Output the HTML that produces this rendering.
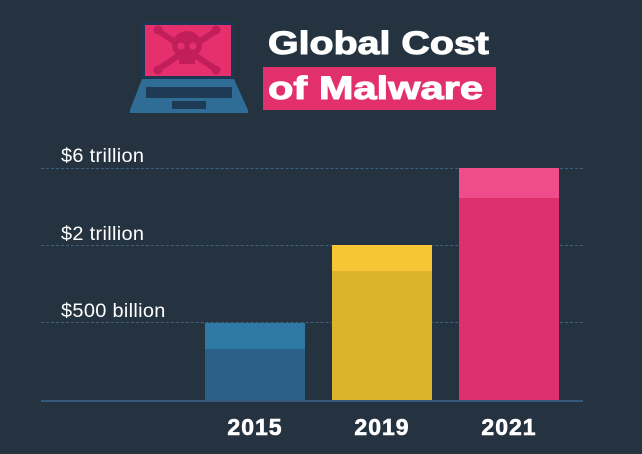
<!DOCTYPE html>
<html><head><meta charset="utf-8"><style>
html,body{margin:0;padding:0}
body{width:642px;height:454px;background:#253341;position:relative;overflow:hidden;font-family:"Liberation Sans",Arial,sans-serif}
.abs{position:absolute}
.dash{position:absolute;left:41px;width:542px;height:0;border-top:1px dashed #3f6180}
.lbl{position:absolute;left:61px;color:#fff;font-size:19px;letter-spacing:0.3px;transform:scaleX(1.05);transform-origin:left}
.yr{position:absolute;color:#fff;font-weight:bold;font-size:23px;width:100px;text-align:center;top:414px;-webkit-text-stroke:0.6px #fff;letter-spacing:1px}
.tt{position:absolute;color:#fff;font-weight:bold;font-size:32px;transform:scaleX(1.23);transform-origin:left;-webkit-text-stroke:1px #fff;white-space:nowrap}
</style></head><body>
<svg class="abs" style="left:0;top:0" width="642" height="454">
 <path d="M142 79 L234 79 L248 110 L248 113 L130 113 L130 110 Z" fill="#2f6d96"/>
 <rect x="142" y="22" width="92" height="57" fill="#1d3652"/>
 <rect x="145" y="25" width="86" height="51" fill="#e6306e"/>
 <rect x="146" y="87" width="86" height="11" fill="#1f3a55"/>
 <rect x="172" y="101" width="34" height="8" fill="#1f3a55"/>
 <g fill="#c21f5a" stroke="#c21f5a">
  <line x1="160" y1="32" x2="214" y2="68" stroke-width="6"/>
  <line x1="214" y1="32" x2="160" y2="68" stroke-width="6"/>
  <circle cx="158" cy="30" r="4"/><circle cx="216" cy="30" r="4"/>
  <circle cx="158" cy="70" r="4"/><circle cx="216" cy="70" r="4"/>
  <ellipse cx="187" cy="45" rx="15" ry="14" stroke="none"/>
  <rect x="179" y="54" width="16" height="10" stroke="none"/>
 </g>
 <circle cx="181" cy="46" r="3.5" fill="#e6306e"/><circle cx="193" cy="46" r="3.5" fill="#e6306e"/>
</svg>
<div class="tt" style="left:268px;top:25px">Global Cost</div>
<div class="abs" style="left:263px;top:67px;width:233px;height:43px;background:#e2306c"></div>
<div class="tt" style="left:268px;top:70px;transform:scaleX(1.3)">of Malware</div>

<div class="dash" style="top:168px"></div>
<div class="dash" style="top:245px"></div>
<div class="dash" style="top:322px"></div>
<div class="lbl" style="top:146px">$6 trillion</div>
<div class="lbl" style="top:224px">$2 trillion</div>
<div class="lbl" style="top:301px">$500 billion</div>

<div class="abs" style="left:205px;top:323px;width:100px;height:78px;background:#2a6088"></div>
<div class="abs" style="left:205px;top:323px;width:100px;height:26px;background:#2f7aa5"></div>
<div class="abs" style="left:332px;top:245px;width:100px;height:156px;background:#dcb42c"></div>
<div class="abs" style="left:332px;top:245px;width:100px;height:26px;background:#f7c634"></div>
<div class="abs" style="left:459px;top:168px;width:100px;height:233px;background:#de306c"></div>
<div class="abs" style="left:459px;top:168px;width:100px;height:30px;background:#ee4c8a"></div>
<div class="abs" style="left:41px;top:400px;width:542px;height:2px;background:#35597a"></div>

<div class="yr" style="left:205px">2015</div>
<div class="yr" style="left:332px">2019</div>
<div class="yr" style="left:459px">2021</div>
</body></html>
